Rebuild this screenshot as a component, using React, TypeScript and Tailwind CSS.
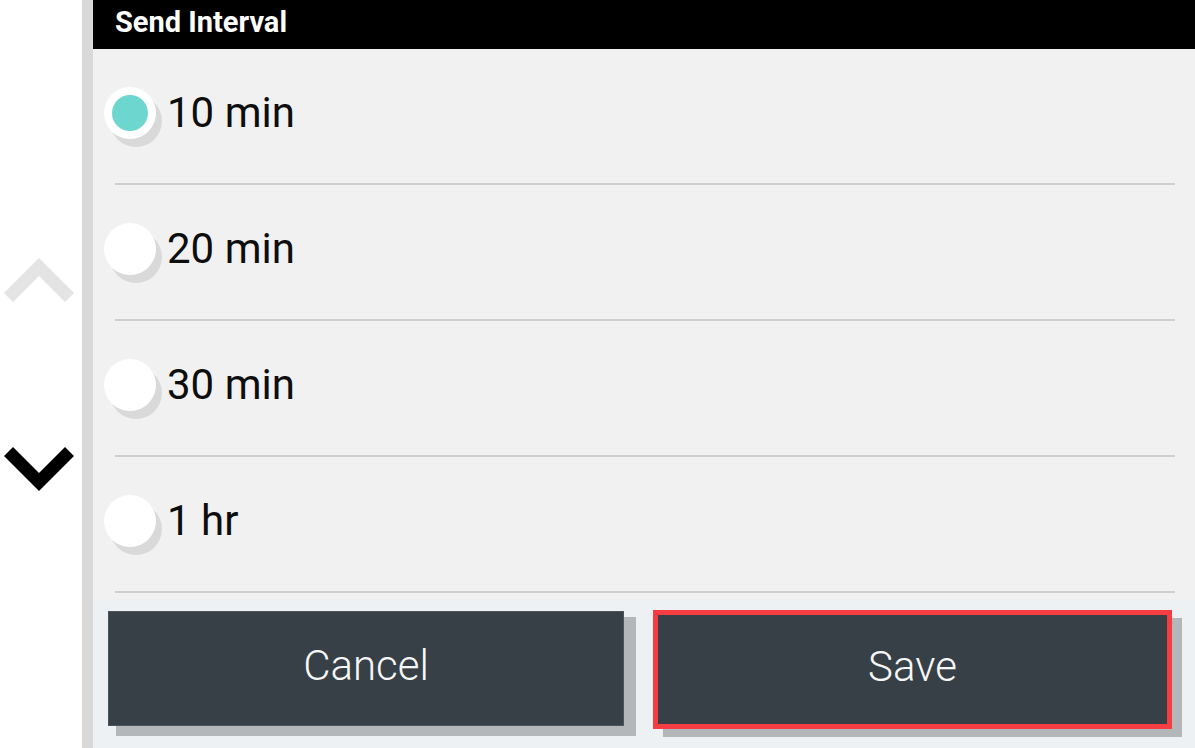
import { useState } from "react";

const options = ["10 min", "20 min", "30 min", "1 hr"];

const ChevronUp = ({ color }: { color: string }) => (
  <svg width="70" height="44" viewBox="0 0 70 44">
    <polygon points="35,0 70,35 61,44 35,18 9,44 0,35" fill={color} />
  </svg>
);

const ChevronDown = ({ color }: { color: string }) => (
  <svg width="70" height="44" viewBox="0 0 70 44">
    <polygon points="9,0 35,26 61,0 70,9 35,44 0,9" fill={color} />
  </svg>
);

const Radio = ({ checked }: { checked: boolean }) => (
  <div className="w-[52px] h-[52px] rounded-full bg-white shadow-[6px_8px_0_#d9d9d9] flex items-center justify-center shrink-0">
    {checked && <div className="w-[36px] h-[36px] rounded-full bg-[#6dd6cf]" />}
  </div>
);

const App = () => {
  const [selected, setSelected] = useState(0);

  return (
    <div className="w-[1195px] h-[748px] flex overflow-hidden font-['Roboto',sans-serif]">
      {/* scroll arrows */}
      <div className="w-[82px] bg-white flex flex-col items-start pl-[4px] pt-[258px]">
        <ChevronUp color="#e4e4e4" />
        <div className="mt-[145px]">
          <ChevronDown color="#000000" />
        </div>
      </div>

      <div className="w-[11px] bg-[#d9d9d9]" />

      {/* dialog */}
      <div className="flex-1 flex flex-col bg-[#f1f1f1]">
        <div className="h-[49px] bg-black flex items-center pl-[22px] pb-[3px]">
          <span className="text-white font-bold text-[29px]">Send Interval</span>
        </div>

        <div className="flex flex-col pb-[6px]">
          {options.map((opt, i) => (
            <div key={opt}>
              <div
                className="h-[134px] flex items-center pl-[11px] pb-[7px] cursor-pointer"
                onClick={() => setSelected(i)}
              >
                <Radio checked={selected === i} />
                <span className="ml-[11px] text-[42px] text-[#0d0d0d]">{opt}</span>
              </div>
              <div className="h-[2px] ml-[22px] mr-[20px] bg-[#d0d0d0]" />
            </div>
          ))}
        </div>

        <div className="flex-1 bg-[#edf1f4] flex items-start pt-[11px] pl-[15px]">
          <button className="mt-[1px] w-[516px] h-[115px] bg-[#364046] border border-[#4b555b] shadow-[10px_8px_0_2px_#b3b7ba] flex items-center justify-center pb-[6px] text-[#f7f7f7] font-light text-[42px]">
            Cancel
          </button>
          <button className="ml-[29px] w-[519px] h-[119px] bg-[#364046] border-[5px] border-[#f63e42] shadow-[10px_8px_0_0_#b3b7ba] flex items-center justify-center pb-[6px] text-[#f7f7f7] font-light text-[42px]">
            Save
          </button>
        </div>
      </div>
    </div>
  );
};

export default App;
